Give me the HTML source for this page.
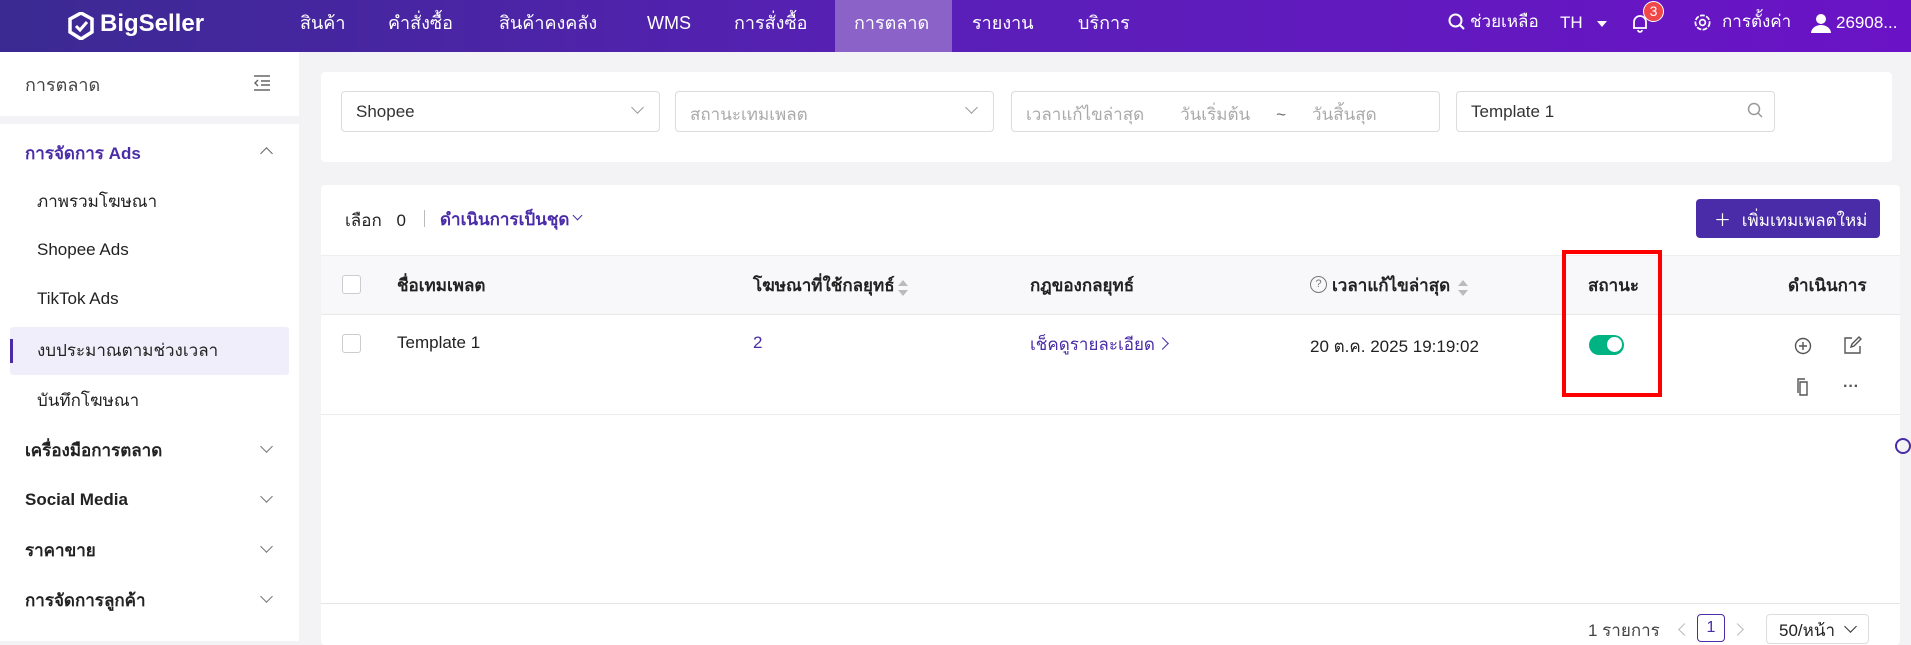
<!DOCTYPE html>
<html><head><meta charset="utf-8"><style>
*{box-sizing:border-box;margin:0;padding:0}
body{width:1911px;height:641px;overflow:hidden;background:#f3f3f5;font-family:"Liberation Sans","Noto Sans CJK SC",sans-serif;color:#222;font-size:16px;position:relative}
.a{position:absolute;white-space:nowrap}
.hdr{position:absolute;left:0;top:0;width:1911px;height:52px;background:linear-gradient(90deg,#3b2a92,#5a1fb8 50%,#6a13c6);color:#fff}
.nav{font-size:18px;top:8px}
.side{position:absolute;left:0;top:52px;width:299px;height:589px;background:#fff}
.card{position:absolute;background:#fff;border-radius:4px}
.inp{position:absolute;top:91px;height:41px;border:1px solid #dcdcdc;border-radius:4px;background:#fff;font-size:17px;padding:9px 14px;color:#333}
.ph{color:#aaa}
.chev{position:absolute;width:9px;height:9px;border-right:1.5px solid #999;border-bottom:1.5px solid #999;transform:rotate(45deg)}
.si{font-size:17px;left:37px}
.sg{font-size:17px;left:25px;font-weight:bold;color:#222}
.cb{position:absolute;width:19px;height:19px;border:1px solid #ccc;border-radius:3px;background:#fff}
</style></head><body>
<div class="hdr">
 <svg class="a" style="left:68px;top:12px" width="26" height="28" viewBox="0 0 26 28"><path d="M13 1L24 7V20L13 27L2 20V7Z" fill="none" stroke="#fff" stroke-width="3.5"/><path d="M8 14L12 18L19 10" fill="none" stroke="#fff" stroke-width="3"/></svg>
 <div class="a" style="left:100px;top:10px;font-size:24px;font-weight:bold">BigSeller</div>
 <div class="a" style="left:835px;top:0;width:117px;height:52px;background:#8a62c8"></div>
 <div class="a nav" style="left:300px">สินค้า</div>
 <div class="a nav" style="left:388px">คำสั่งซื้อ</div>
 <div class="a nav" style="left:499px">สินค้าคงคลัง</div>
 <div class="a nav" style="left:647px;top:13px">WMS</div>
 <div class="a nav" style="left:734px">การสั่งซื้อ</div>
 <div class="a nav" style="left:854px">การตลาด</div>
 <div class="a nav" style="left:972px">รายงาน</div>
 <div class="a nav" style="left:1078px">บริการ</div>
 <svg class="a" style="left:1448px;top:13px" width="18" height="18" viewBox="0 0 18 18"><circle cx="7.5" cy="7.5" r="6" fill="none" stroke="#fff" stroke-width="2"/><path d="M12 12L16 16" stroke="#fff" stroke-width="2"/></svg>
 <div class="a nav" style="left:1470px;font-size:17px">ช่วยเหลือ</div>
 <div class="a nav" style="left:1560px;font-size:17px;top:13px">TH</div>
 <div class="a" style="left:1597px;top:21px;border:5px solid transparent;border-top:6px solid #fff"></div>
 <svg class="a" style="left:1630px;top:13px" width="20" height="20" viewBox="0 0 20 20"><path d="M4 15V9a6 6 0 0 1 12 0v6H3M8 17a2 2 0 0 0 4 0" fill="none" stroke="#fff" stroke-width="1.8"/></svg>
 <div class="a" style="left:1643px;top:1px;width:21px;height:21px;border-radius:50%;background:#f04848;border:1px solid #fff;font-size:14px;text-align:center;line-height:19px">3</div>
 <svg class="a" style="left:1693px;top:13px" width="19" height="19" viewBox="0 0 20 20"><circle cx="10" cy="10" r="7.5" fill="none" stroke="#fff" stroke-width="1.8" stroke-dasharray="5 1.5"/><circle cx="10" cy="10" r="3" fill="none" stroke="#fff" stroke-width="1.8"/></svg>
 <div class="a nav" style="left:1722px;font-size:17px">การตั้งค่า</div>
 <svg class="a" style="left:1810px;top:12px" width="22" height="22" viewBox="0 0 22 22"><circle cx="11" cy="7" r="5" fill="#fff"/><path d="M1 21a10 8 0 0 1 20 0Z" fill="#fff"/></svg>
 <div class="a nav" style="left:1836px;font-size:17px;top:13px">26908...</div>
</div>

<div class="side">
 <div class="a" style="left:25px;top:18px;font-size:18px;color:#444">การตลาด</div>
 <svg class="a" style="left:253px;top:23px" width="18" height="16" viewBox="0 0 18 16"><path d="M1 1H17M8 6H17M8 10H17M1 15H17M5 5L2 8L5 11" fill="none" stroke="#666" stroke-width="1.5"/></svg>
 <div class="a" style="left:0;top:64px;width:299px;height:8px;background:#f3f3f5"></div>
 <div class="a sg" style="top:88px;color:#4a2ca8">การจัดการ Ads</div>
 <div class="chev" style="left:262px;top:97px;transform:rotate(225deg);border-color:#666"></div>
 <div class="a si" style="top:136px">ภาพรวมโฆษณา</div>
 <div class="a si" style="top:188px">Shopee Ads</div>
 <div class="a si" style="top:237px">TikTok Ads</div>
 <div class="a" style="left:10px;top:275px;width:279px;height:48px;background:#f0eefa;border-radius:3px"></div>
 <div class="a" style="left:10px;top:287px;width:3px;height:24px;background:#4a2ca8"></div>
 <div class="a si" style="top:285px">งบประมาณตามช่วงเวลา</div>
 <div class="a si" style="top:335px">บันทึกโฆษณา</div>
 <div class="a sg" style="top:385px">เครื่องมือการตลาด</div>
 <div class="a sg" style="top:438px">Social Media</div>
 <div class="a sg" style="top:485px">ราคาขาย</div>
 <div class="a sg" style="top:535px">การจัดการลูกค้า</div>
 <div class="chev" style="left:262px;top:390px;border-color:#777"></div>
 <div class="chev" style="left:262px;top:440px;border-color:#777"></div>
 <div class="chev" style="left:262px;top:490px;border-color:#777"></div>
 <div class="chev" style="left:262px;top:540px;border-color:#777"></div>
</div>

<div class="card" style="left:321px;top:72px;width:1571px;height:90px"></div>
<div class="inp" style="left:341px;width:319px;padding-top:10px">Shopee</div><div class="chev" style="left:633px;top:103px"></div>
<div class="inp ph" style="left:675px;width:319px">สถานะเทมเพลต</div><div class="chev" style="left:967px;top:103px"></div>
<div class="inp ph" style="left:1011px;width:429px">เวลาแก้ไขล่าสุด<span style="margin-left:36px">วันเริ่มต้น</span><span style="margin-left:26px;color:#666">~</span><span style="margin-left:26px">วันสิ้นสุด</span></div>
<div class="inp" style="left:1456px;width:319px;padding-top:10px">Template 1</div>
<svg class="a" style="left:1747px;top:102px" width="16" height="16" viewBox="0 0 16 16"><circle cx="7" cy="7" r="5.5" fill="none" stroke="#999" stroke-width="1.5"/><path d="M11 11L15 15" stroke="#999" stroke-width="1.5"/></svg>

<div class="card" style="left:321px;top:185px;width:1579px;height:460px"></div>
<div class="a" style="left:345px;top:207px;font-size:17px">เลือก <span style="margin-left:10px">0</span></div>
<div class="a" style="left:424px;top:210px;width:1px;height:17px;background:#bbb"></div>
<div class="a" style="left:440px;top:206px;font-size:17px;color:#4a2ca8;font-weight:bold">ดำเนินการเป็นชุด</div>
<div class="chev" style="left:574px;top:212px;width:7px;height:7px;border-color:#4a2ca8"></div>
<div class="a" style="left:1696px;top:199px;width:184px;height:39px;background:#4a2ca8;border-radius:4px;color:#fff;font-size:17px;padding:7px 0 0 18px">＋ <span style="margin-left:6px">เพิ่มเทมเพลตใหม่</span></div>

<div class="a" style="left:321px;top:255px;width:1579px;height:60px;background:#f8f8fa;border-top:1px solid #eee;border-bottom:1px solid #e8e8e8"></div>
<div class="cb" style="left:342px;top:275px"></div>
<div class="a" style="left:397px;top:272px;font-size:17px;font-weight:bold">ชื่อเทมเพลต</div>
<div class="a" style="left:753px;top:272px;font-size:17px;font-weight:bold">โฆษณาที่ใช้กลยุทธ์</div>
<div class="a" style="left:898px;top:275px;border:5px solid transparent;border-bottom:6px solid #bbb"></div>
<div class="a" style="left:898px;top:290px;border:5px solid transparent;border-top:6px solid #bbb"></div>
<div class="a" style="left:1030px;top:272px;font-size:17px;font-weight:bold">กฎของกลยุทธ์</div>
<div class="a" style="left:1310px;top:276px;width:17px;height:17px;border:1.5px solid #777;border-radius:50%;font-size:11px;text-align:center;line-height:14px;color:#777">?</div>
<div class="a" style="left:1332px;top:272px;font-size:17px;font-weight:bold">เวลาแก้ไขล่าสุด</div>
<div class="a" style="left:1458px;top:275px;border:5px solid transparent;border-bottom:6px solid #bbb"></div>
<div class="a" style="left:1458px;top:290px;border:5px solid transparent;border-top:6px solid #bbb"></div>
<div class="a" style="left:1588px;top:272px;font-size:17px;font-weight:bold">สถานะ</div>
<div class="a" style="left:1788px;top:272px;font-size:17px;font-weight:bold">ดำเนินการ</div>

<div class="cb" style="left:342px;top:334px"></div>
<div class="a" style="left:397px;top:333px;font-size:17px">Template 1</div>
<div class="a" style="left:753px;top:333px;font-size:17px;color:#4a2ca8">2</div>
<div class="a" style="left:1030px;top:331px;font-size:17px;color:#4a2ca8">เช็คดูรายละเอียด</div>
<div class="chev" style="left:1158px;top:339px;transform:rotate(-45deg);border-color:#4a2ca8"></div>
<div class="a" style="left:1310px;top:333px;font-size:17px">20 ต.ค. 2025 19:19:02</div>
<div class="a" style="left:1589px;top:335px;width:35px;height:20px;border-radius:10px;background:#00b383"></div>
<div class="a" style="left:1607px;top:337px;width:15px;height:15px;border-radius:50%;background:#fff"></div>
<div class="a" style="left:1562px;top:250px;width:100px;height:147px;border:4px solid #f00"></div>
<svg class="a" style="left:1794px;top:337px" width="18" height="18" viewBox="0 0 18 18"><circle cx="9" cy="9" r="7.5" fill="none" stroke="#555" stroke-width="1.4"/><path d="M9 5V13M5 9H13" stroke="#555" stroke-width="1.4"/></svg>
<svg class="a" style="left:1843px;top:336px" width="19" height="19" viewBox="0 0 19 19"><path d="M9 2H2V17H17V10M8 11L9 8L16 1L18 3L11 10Z" fill="none" stroke="#555" stroke-width="1.4"/></svg>
<svg class="a" style="left:1794px;top:378px" width="18" height="18" viewBox="0 0 18 18"><path d="M4 3V1H11M6 4H13V17H6Z" fill="none" stroke="#555" stroke-width="1.4"/><path d="M4 3V15" stroke="#555" stroke-width="1.4"/></svg>
<div class="a" style="left:1843px;top:378px;font-size:16px;color:#555;font-weight:bold">···</div>
<div class="a" style="left:321px;top:414px;width:1579px;height:1px;background:#ececec"></div>
<div class="a" style="left:1895px;top:438px;width:16px;height:16px;border:2px solid #4a2ca8;border-radius:50%"></div>

<div class="a" style="left:321px;top:603px;width:1579px;height:1px;background:#e5e5e5"></div>
<div class="a" style="left:1588px;top:617px;font-size:17px;color:#444">1 รายการ</div>
<div class="chev" style="left:1680px;top:625px;transform:rotate(135deg);border-color:#bbb"></div>
<div class="a" style="left:1697px;top:614px;width:28px;height:28px;border:1px solid #4a2ca8;border-radius:4px;text-align:center;font-size:16px;padding-top:4px;color:#4a2ca8">1</div>
<div class="chev" style="left:1733px;top:625px;transform:rotate(-45deg);border-color:#bbb"></div>
<div class="a" style="left:1766px;top:614px;width:103px;height:30px;border:1px solid #ddd;border-radius:4px;font-size:17px;padding:2px 0 0 12px">50/หน้า</div>
<div class="chev" style="left:1846px;top:622px;border-color:#333"></div>
</body></html>
